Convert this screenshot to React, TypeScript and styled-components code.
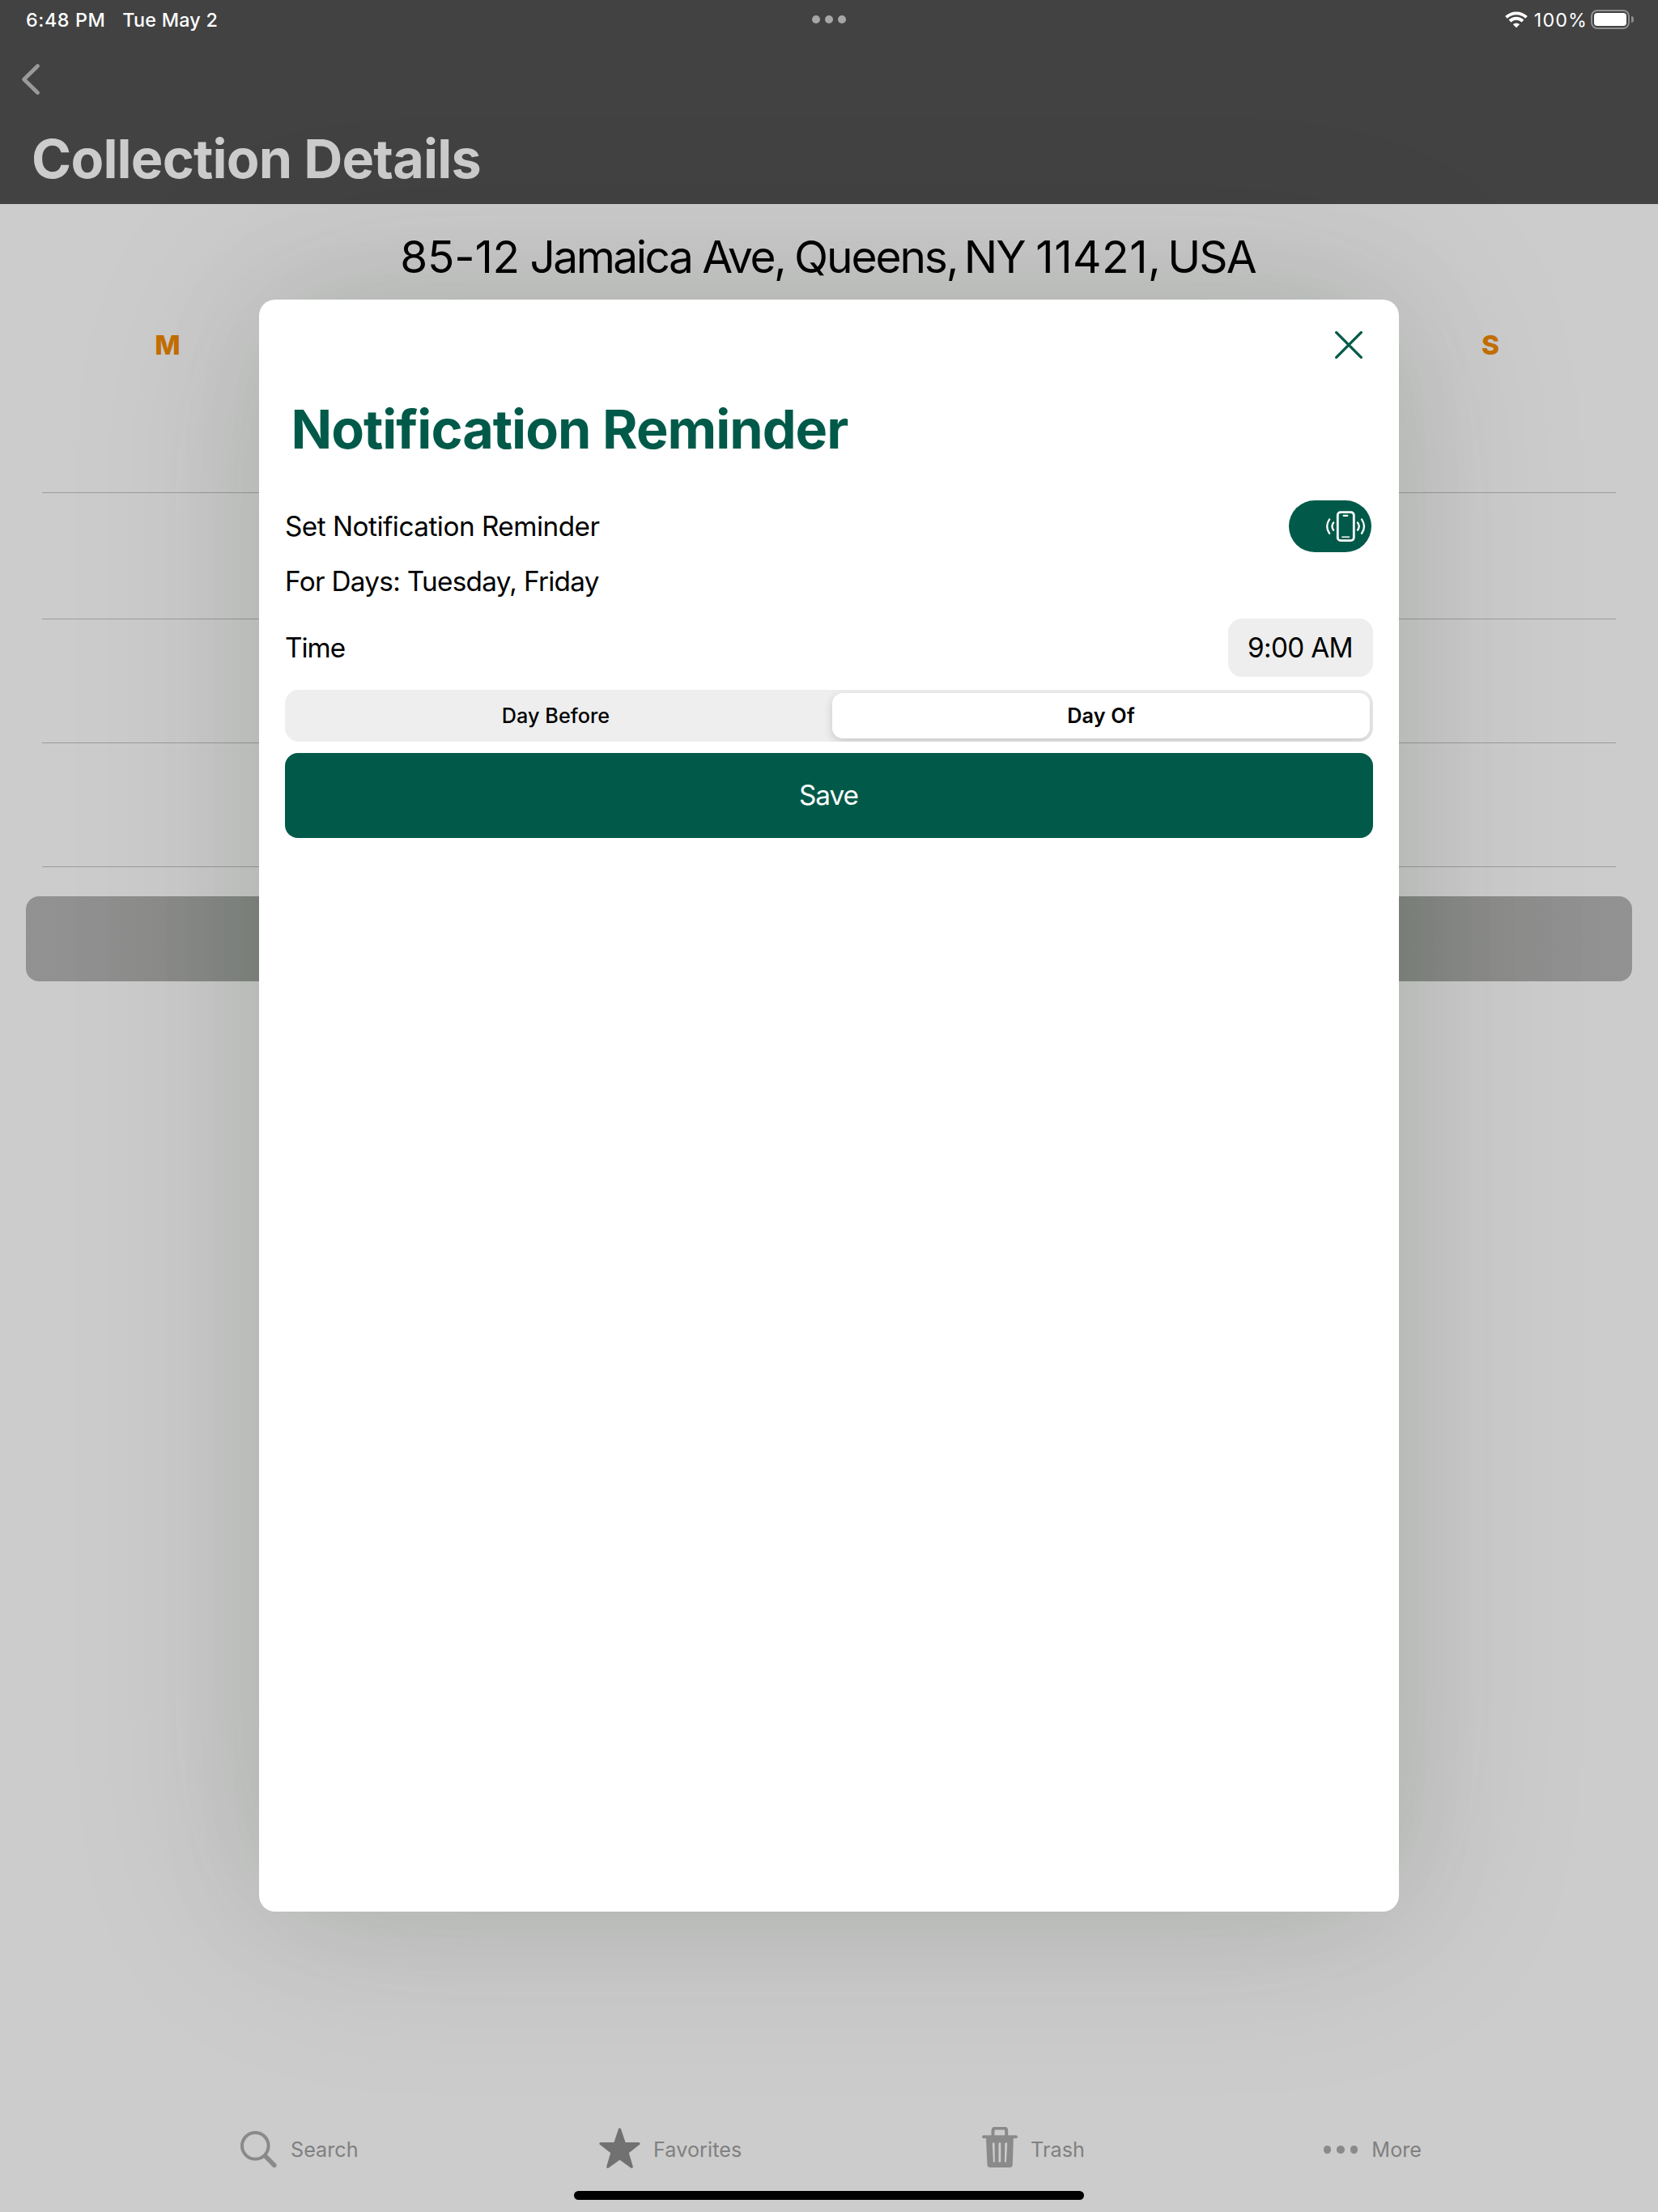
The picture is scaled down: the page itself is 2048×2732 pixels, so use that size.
import React from "react";
import styled, { createGlobalStyle, css } from "styled-components";

const GREEN = "#015a49";

const GlobalStyle = createGlobalStyle`
  * { box-sizing: border-box; }
  body {
    margin: 0;
    background: #cccccc;
    font-family: Inter, "Liberation Sans", sans-serif;
  }
`;

const Screen = styled.div`
  position: relative;
  display: flex;
  flex-direction: column;
  width: 2048px;
  height: 2732px;
  overflow: hidden;
  background: #cccccc;
`;

/* ---------- header ---------- */

const Header = styled.header`
  height: 252px;
  background: #424242;
`;

const StatusBar = styled.div`
  display: grid;
  grid-template-columns: 1fr auto 1fr;
  align-items: center;
  height: 48px;
  padding: 0 30px 0 32px;
  color: #ffffff;
  font-size: 23.3px;
  font-weight: 500;
  line-height: 47px;
`;

const StatusLeft = styled.div`
  display: flex;
  gap: 21px;
`;

const StatusText = styled.span<{ $spacing: number; $weight?: number }>`
  letter-spacing: ${(p) => p.$spacing}px;
  font-weight: ${(p) => p.$weight ?? 500};
  white-space: nowrap;
`;

const Dots = styled.div<{ $size: number; $gap: number; $color: string }>`
  display: flex;
  gap: ${(p) => p.$gap}px;
  i {
    width: ${(p) => p.$size}px;
    height: ${(p) => p.$size}px;
    border-radius: 50%;
    background: ${(p) => p.$color};
  }
`;

const StatusDots = styled(Dots)`
  margin-right: 2px;
`;

const StatusRight = styled.div`
  display: flex;
  align-items: center;
  justify-content: flex-end;
`;

const WifiIcon = styled.svg`
  width: 28px;
  height: 21px;
  margin-right: 8px;
`;

const Battery = styled.div`
  display: flex;
  align-items: center;
  margin-left: 4px;
`;

const BatteryShell = styled.div`
  width: 48px;
  height: 24px;
  padding: 2px;
  border: 2px solid #8e8e8e;
  border-radius: 8px;
`;

const BatteryLevel = styled.div`
  height: 100%;
  border-radius: 4px;
  background: #ffffff;
`;

const BatteryTip = styled.div`
  width: 3px;
  height: 8px;
  margin-left: 2px;
  border-radius: 0 3px 3px 0;
  background: #8e8e8e;
`;

const NavRow = styled.div`
  display: flex;
  align-items: center;
  height: 100px;
  padding-left: 26px;
`;

const ChevronIcon = styled.svg`
  width: 24px;
  height: 40px;
`;

const PageTitle = styled.h1`
  margin: 8px 0 0 39px;
  color: #cccccc;
  font-size: 66.5px;
  font-weight: 700;
  line-height: 80px;
  letter-spacing: -0.8px;
  white-space: nowrap;
`;

/* ---------- collection details ---------- */

const Content = styled.main`
  flex: 1;
  padding-top: 25px;
`;

const Address = styled.h2`
  margin: 0;
  padding-right: 3px;
  color: #000000;
  font-size: 55px;
  font-weight: 400;
  line-height: 80px;
  letter-spacing: -1.85px;
  text-align: center;
  white-space: nowrap;
`;

const Tracked = styled.span<{ $spacing: number }>`
  letter-spacing: ${(p) => p.$spacing}px;
`;

const WeekHeader = styled.div`
  display: flex;
  justify-content: space-between;
  margin: 49px 191px 0;
  color: #c46f00;
  font-size: 33.3px;
  font-weight: 800;
  line-height: 40px;
`;

const Day = styled.span`
  width: 32px;
  text-align: center;
`;

const WeekRow = styled.div<{ $height: number }>`
  height: ${(p) => p.$height}px;
  margin: 0 52px;
  border-bottom: 1px solid #9b9b9b;
`;

const DisabledButton = styled.div`
  height: 105px;
  margin: 36px 32px 0;
  border-radius: 16px;
  background: linear-gradient(
    90deg,
    #929292 0%,
    #909090 4%,
    #8d8d8c 8%,
    #868885 14.5%,
    #868885 85.5%,
    #8d8d8c 92%,
    #909090 96%,
    #929292 100%
  );
`;

/* ---------- tab bar ---------- */

const TabBar = styled.nav`
  display: grid;
  grid-template-columns: 443px 473px 422px auto;
  height: 86px;
  padding-left: 297px;
`;

const Tab = styled.div`
  display: flex;
  align-items: center;
  color: #808080;
  font-size: 25.2px;
  line-height: 40px;
`;

const TabIcon = styled.svg<{ $width: number; $gap: number }>`
  width: ${(p) => p.$width}px;
  height: 56px;
  margin-right: ${(p) => p.$gap}px;
`;

const MoreDots = styled(Dots)`
  margin-right: 17px;
`;

const HomeIndicator = styled.div`
  width: 630px;
  height: 11px;
  margin: 8px auto 15px;
  border-radius: 6px;
  background: #000000;
`;

/* ---------- reminder sheet ---------- */

const Sheet = styled.section`
  position: absolute;
  top: 370px;
  left: 320px;
  width: 1408px;
  height: 1991px;
  padding: 39px 32px 0;
  border-radius: 20px;
  background: #ffffff;
  box-shadow:
    0 0 150px rgba(15, 40, 5, 0.07),
    0 0 250px rgba(15, 40, 5, 0.13);
`;

const CloseRow = styled.div`
  display: flex;
  justify-content: flex-end;
  padding-right: 13px;
`;

const CloseIcon = styled.svg`
  width: 34px;
  height: 34px;
`;

const SheetTitle = styled.h2`
  margin: 47px 0 0 7.5px;
  color: ${GREEN};
  font-size: 66.5px;
  font-weight: 700;
  line-height: 80px;
  letter-spacing: -1px;
  white-space: nowrap;
`;

const Row = styled.div<{ $top: number; $height: number }>`
  display: flex;
  align-items: center;
  justify-content: space-between;
  height: ${(p) => p.$height}px;
  margin-top: ${(p) => p.$top}px;
`;

const BodyText = styled.span<{ $spacing: number }>`
  color: #000000;
  font-size: 33.3px;
  line-height: 40px;
  letter-spacing: ${(p) => p.$spacing}px;
  white-space: nowrap;
`;

const Toggle = styled.div`
  width: 102px;
  height: 64px;
  margin-right: 2px;
  border-radius: 32px;
  background: ${GREEN};
`;

const ToggleIcon = styled.svg`
  display: block;
  width: 102px;
  height: 64px;
`;

const TimePicker = styled.div`
  display: flex;
  align-items: center;
  justify-content: center;
  width: 179px;
  height: 72px;
  padding-right: 1px;
  border-radius: 17px;
  background: #eeeeee;
`;

const Segmented = styled.div`
  display: flex;
  gap: 7px;
  height: 64px;
  margin-top: 16px;
  padding: 4px 4px 4px 0;
  border-radius: 17px;
  background: #eeeeee;
  overflow: hidden;
`;

const Segment = styled.div<{ $active?: boolean }>`
  flex: 1;
  color: #000000;
  font-size: 25.2px;
  font-weight: 500;
  line-height: 56px;
  letter-spacing: 0.05px;
  text-align: center;
  ${(p) =>
    p.$active &&
    css`
      flex: 0 0 664px;
      border-radius: 13px;
      background: #ffffff;
      box-shadow: 0 4px 12px rgba(0, 0, 0, 0.16);
      font-weight: 600;
      letter-spacing: 0.2px;
    `}
`;

const SaveButton = styled.div`
  display: flex;
  align-items: center;
  justify-content: center;
  height: 105px;
  margin-top: 14px;
  padding: 0 1px 2px 0;
  border-radius: 16px;
  background: ${GREEN};
  color: #ffffff;
  font-size: 33.3px;
  letter-spacing: -1px;
`;

export default function App() {
  return (
    <>
      <GlobalStyle />
      <Screen>
        <Header>
          <StatusBar>
            <StatusLeft>
              <StatusText $spacing={0.6}>6:48 PM</StatusText>
              <StatusText $spacing={0.25}>Tue May 2</StatusText>
            </StatusLeft>
            <StatusDots $size={10} $gap={6} $color="#a6a6a6">
              <i />
              <i />
              <i />
            </StatusDots>
            <StatusRight>
              <WifiIcon viewBox="0 0 28 21" fill="none" stroke="#fff" strokeWidth="3.9">
                <path d="M1.5 7.4A18 18 0 0 1 26.5 7.4" />
                <path d="M6 12A11.3 11.3 0 0 1 22 12" />
                <path d="M14 20.3L9.8 16.1A6.2 6.2 0 0 1 18.2 16.1Z" fill="#fff" stroke="none" />
              </WifiIcon>
              <StatusText $spacing={1.1} $weight={400}>
                100%
              </StatusText>
              <Battery>
                <BatteryShell>
                  <BatteryLevel />
                </BatteryShell>
                <BatteryTip />
              </Battery>
            </StatusRight>
          </StatusBar>
          <NavRow>
            <ChevronIcon
              viewBox="0 0 24 40"
              fill="none"
              stroke="#9a9a9a"
              strokeWidth="4.8"
              strokeLinecap="round"
              strokeLinejoin="round"
            >
              <path d="M20.5 3.5L3.6 20L20.5 36.5" />
            </ChevronIcon>
          </NavRow>
          <PageTitle>Collection Details</PageTitle>
        </Header>

        <Content>
          <Address>
            <Tracked $spacing={-0.2}>85-12</Tracked>
            <Tracked $spacing={-3}> </Tracked>
            <Tracked $spacing={-2.5}>Jamaica Ave</Tracked>
            <Tracked $spacing={-3.1}>, </Tracked>
            <Tracked $spacing={-2.1}>Queens</Tracked>
            <Tracked $spacing={-4.7}>, </Tracked>
            NY <Tracked $spacing={0.5}>11421</Tracked>
            <Tracked $spacing={-3.6}>, </Tracked>
            USA
          </Address>
          <WeekHeader>
            <Day>M</Day>
            <Day>S</Day>
          </WeekHeader>
          <WeekRow $height={163} />
          <WeekRow $height={156} />
          <WeekRow $height={153} />
          <WeekRow $height={153} />
          <DisabledButton />
        </Content>

        <TabBar>
          <Tab>
            <TabIcon $width={46} $gap={16} viewBox="0 0 46 56" fill="none" stroke="#8a8a8a" strokeLinecap="round">
              <circle cx="18.3" cy="23.3" r="16.3" strokeWidth="4" />
              <path d="M31 36.2L41.8 47.2" strokeWidth="5.6" />
            </TabIcon>
            <Tracked $spacing={0}>Search</Tracked>
          </Tab>
          <Tab>
            <TabIcon $width={51} $gap={16} viewBox="0 0 51 56">
              <path
                d="M25.5 3L31.4 20.6H49L35 31.4L40.2 49.2L25.5 38.6L10.8 49.2L16 31.4L2 20.6H19.6Z"
                fill="#717171"
                stroke="#717171"
                strokeWidth="3.2"
                strokeLinejoin="round"
              />
            </TabIcon>
            <Tracked $spacing={0.07}>Favorites</Tracked>
          </Tab>
          <Tab>
            <TabIcon $width={44} $gap={16} viewBox="0 0 44 56">
              <path d="M13.5 13V4.8Q13.5 1.4 17 1.4H27Q30.2 1.4 30.2 4.8V13" fill="none" stroke="#8a8a8a" strokeWidth="4" />
              <path d="M2 12.2H42" stroke="#8a8a8a" strokeWidth="3.8" strokeLinecap="round" />
              <path
                fillRule="evenodd"
                fill="#8a8a8a"
                d="M4.9 12H38.9L37.8 46.5Q37.6 50 34 50H10.3Q6.7 50 6.5 46.5Z
                   M12.8 20L13.9 43Q14.9 44.2 15.9 43L15.5 20Q14.1 18.5 12.8 20Z
                   M20.5 20V43Q21.9 44.2 23.3 43V20Q21.9 18.5 20.5 20Z
                   M28.3 20L27.9 43Q28.9 44.2 30 43L31.2 20Q29.7 18.5 28.3 20Z"
              />
            </TabIcon>
            <Tracked $spacing={0.06}>Trash</Tracked>
          </Tab>
          <Tab>
            <MoreDots $size={9.4} $gap={7.1} $color="#8a8a8a">
              <i />
              <i />
              <i />
            </MoreDots>
            <Tracked $spacing={0.03}>More</Tracked>
          </Tab>
        </TabBar>
        <HomeIndicator />

        <Sheet>
          <CloseRow>
            <CloseIcon viewBox="0 0 34 34" stroke={GREEN} strokeWidth="3.3" strokeLinecap="round">
              <path d="M1.7 1.7L32.3 32.3M32.3 1.7L1.7 32.3" />
            </CloseIcon>
          </CloseRow>
          <SheetTitle>Notification Reminder</SheetTitle>
          <Row $top={48} $height={64}>
            <BodyText $spacing={-0.5}>Set Notification Reminder</BodyText>
            <Toggle>
              <ToggleIcon viewBox="0 0 102 64" fill="none" stroke="#fff" strokeWidth="2.3" strokeLinecap="round">
                <rect x="60.3" y="14.6" width="20" height="35" rx="3.6" strokeWidth="2.8" />
                <path d="M67.7 18.8H72.3" strokeWidth="2.3" />
                <path d="M65.8 45.3H74.6" strokeWidth="1.4" />
                <path d="M50.2 23.4Q44.2 32 50.2 40.8M55.2 27.5Q51.7 32 55.2 36.7M90 23.4Q96 32 90 40.8M85 27.5Q88.5 32 85 36.7" />
              </ToggleIcon>
            </Toggle>
          </Row>
          <Row $top={16} $height={40}>
            <BodyText $spacing={-0.7}>For Days: Tuesday, Friday</BodyText>
          </Row>
          <Row $top={26} $height={72}>
            <BodyText $spacing={-1}>Time</BodyText>
            <TimePicker>
              <BodyText $spacing={-0.7}>9:00 AM</BodyText>
            </TimePicker>
          </Row>
          <Segmented>
            <Segment>Day Before</Segment>
            <Segment $active>Day Of</Segment>
          </Segmented>
          <SaveButton>Save</SaveButton>
        </Sheet>
      </Screen>
    </>
  );
}
